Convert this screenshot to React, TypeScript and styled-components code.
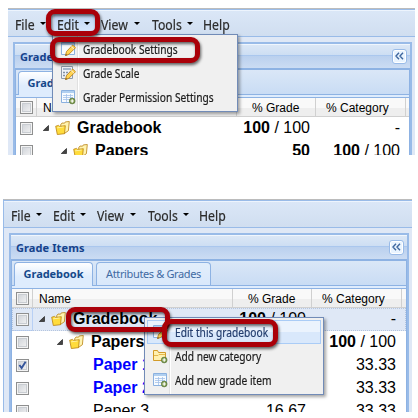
import React from "react";
import styled, { createGlobalStyle, css } from "styled-components";

const Global = createGlobalStyle`
  * { box-sizing: border-box; }
  body { margin: 0; background: #fff; overflow: hidden; }
`;

const ui = `"Noto Sans", "Open Sans", sans-serif`;
const grid = `"Liberation Sans", Arial, sans-serif`;

const Page = styled.main`
  width: 418px;
  height: 418px;
  padding: 8px 0 0 3px;
  display: flex;
  flex-direction: column;
  gap: 44px;
  background: #fff;
  font-family: ${ui};
`;

const Capture = styled.section<{ $second?: boolean }>`
  position: relative;
  width: ${(p) => (p.$second ? 409 : 407)}px;
  height: ${(p) => (p.$second ? 213 : 147)}px;
  margin-left: ${(p) => (p.$second ? 0 : 5)}px;
  overflow: hidden;
  background: #dfe8f6;
  border-top: 1px solid #bcbcbc;
  ${(p) => p.$second && css`border-left: 1px solid #99bbe8;`}
`;

const MenuBar = styled.nav`
  display: flex;
  height: 28px;
  padding-left: 7px;
  border-top: 1px solid #99bbe8;
  border-bottom: 1px solid #99bbe8;
  background: linear-gradient(#dbe7f7, #d0def0);
  box-shadow: inset 0 1px #edf4fd;
`;

const MenuEntry = styled.div<{ $w: number; $pressed?: boolean }>`
  display: flex;
  align-items: center;
  width: ${(p) => p.$w}px;
  height: 22px;
  margin-top: 3px;
  font-size: 14px;
  color: #2b2b2b;
  -webkit-text-stroke: 0.2px #2b2b2b;
  position: relative;
  ${(p) => p.$pressed && css`
    &::before {
      content: "";
      position: absolute;
      inset: 0 3px 0 -3px;
      background: linear-gradient(#bdd3f2, #dcebff);
    }
  `}
`;

const MenuLabel = styled.span<{ $w: number }>`
  position: relative;
  flex: none;
  width: ${(p) => p.$w}px;
  white-space: nowrap;
  transform: scaleX(0.875);
  transform-origin: 0 50%;
  margin-right: ${(p) => -p.$w * 0.1}px;
`;

const Caret = styled.i`
  position: relative;
  margin-top: -1px;
  border: 3px solid transparent;
  border-top: 3px solid #000;
  border-bottom: 0;
`;

const Panel = styled.div`
  margin: 5px 3px 0 5px;
  height: 200px;
  border: 2px solid #99bbe8;
`;

const PanelHeader = styled.header`
  display: flex;
  align-items: center;
  justify-content: space-between;
  height: 24px;
  padding: 0 3px 0 5px;
  background: linear-gradient(#f0f6fd 0 1px, #dbe7f6 1px, #cddef3 11px, #aac7ee 11px 12px, #bad0ee 12px, #cbdcf3 100%);
`;

const Title = styled.h2`
  margin: 0;
  font: bold 11px ${ui};
  letter-spacing: 0.1px;
  color: #15428b;
`;

const Collapse = styled.span`
  display: flex;
  align-items: center;
  justify-content: center;
  width: 15px;
  height: 15px;
  border: 1px solid #99bbe8;
  border-radius: 3px;
  background: #e9f4ff;
  box-shadow: inset 0 0 0 1px #fff;
`;

const Inner = styled.div`
  border: 1px solid #8db2e3;
  border-top-width: 2px;
  border-bottom: 0;
`;

const Tabs = styled.div`
  display: flex;
  align-items: flex-end;
  gap: 3px;
  height: 25px;
  padding-left: 2px;
  border-bottom: 1px solid #8db2e3;
  background: linear-gradient(#dae7f7, #c9dcf4);
`;

const Tab = styled.div<{ $active?: boolean }>`
  display: flex;
  align-items: center;
  justify-content: center;
  width: ${(p) => (p.$active ? 79 : 115)}px;
  height: ${(p) => (p.$active ? 24 : 23)}px;
  padding-bottom: 2px;
  margin-bottom: ${(p) => (p.$active ? -1 : 0)}px;
  border: 1px solid #8db2e3;
  border-bottom: 0;
  border-radius: 4px 4px 0 0;
  font: ${(p) => (p.$active ? "bold" : "normal")} 11px ${ui};
  letter-spacing: ${(p) => (p.$active ? -0.05 : -0.36)}px;
  white-space: nowrap;
  color: ${(p) => (p.$active ? "#15498b" : "#416aa3")};
  background: ${(p) => (p.$active ? "linear-gradient(#fff, #deecfd 60%)" : "linear-gradient(#e2eefb, #d9e8fb)")};
`;

const TabSpacer = styled.div`
  height: 3px;
  background: #deecfd;
  border-bottom: 1px solid #8db2e3;
`;

const Columns = styled.div`
  display: grid;
  grid-template-columns: 21px 200px 79px 90px 1fr;
`;

const HeadRow = styled(Columns)`
  height: 19px;
  background: linear-gradient(#f9f9f9 0 10px, #eee 10px);
  border-bottom: 1px solid #d0d0d0;
`;

const HeadCell = styled.div<{ $pad: number }>`
  padding: 3px 0 0 ${(p) => p.$pad}px;
  border-right: 1px solid #d0d0d0;
  font: 12px/15px ${grid};
  color: #000;
  white-space: nowrap;
`;

const Row = styled(Columns)<{ $selected?: boolean }>`
  height: 23px;
  background: ${(p) => (p.$selected ? "#dfe8f6" : "#fff")};
  ${(p) => p.$selected && css`
    outline: 1px dotted #b5c5de;
    outline-offset: -1px;
  `}
`;

const CheckCell = styled.div<{ $edge?: boolean }>`
  padding: 5px 0 0 4px;
  ${(p) => p.$edge && css`border-right: 1px solid #b8d0f5; border-bottom: 1px solid #b8d0f5;`}
`;

const NameCell = styled.div<{ $indent: number; $bold?: boolean; $blue?: boolean }>`
  display: flex;
  align-items: center;
  height: 22px;
  padding-left: ${(p) => p.$indent}px;
  font: ${(p) => (p.$bold ? "bold" : "normal")} 16px/22px ${grid};
  color: ${(p) => (p.$blue ? "#0000ff" : "#000")};
  white-space: nowrap;
`;

const Value = styled.div`
  font: 16px/22px ${grid};
  color: #000;
  text-align: right;
  padding-right: 6px;
  white-space: nowrap;
`;

const Box = styled.span`
  display: flex;
  width: 13px;
  height: 13px;
  border: 1px solid #8e8f8f;
  background: linear-gradient(135deg, #cbcfd5, #f6f6f6);
  box-shadow: inset 0 0 0 1px #f4f4f4, inset 0 0 0 2px #c9cdd2;
`;

const Popup = styled.div<{ $x: number; $y: number; $w: number; $h: number }>`
  position: absolute;
  left: ${(p) => p.$x}px;
  top: ${(p) => p.$y}px;
  width: ${(p) => p.$w}px;
  height: ${(p) => p.$h}px;
  padding: 2px;
  border: 1px solid #718bb7;
  background: linear-gradient(90deg, #f0f0f0 24px, #e0e0e0 24px 25px, #fff 25px 26px, #f0f0f0 26px);
  box-shadow: 2px 2px 3px rgba(0, 0, 0, 0.35);
`;

const PopupItem = styled.div<{ $active?: boolean }>`
  display: flex;
  align-items: center;
  height: 24px;
  padding-left: 4px;
  gap: 7px;
  border: 1px solid ${(p) => (p.$active ? "#aaccf6" : "transparent")};
  background: ${(p) => (p.$active ? "linear-gradient(#ebf3fd 50%, #d9e8fb 50%)" : "none")};
  font-size: 12px;
  color: ${(p) => (p.$active ? "#233d6d" : "#1c1c1c")};
  -webkit-text-stroke: 0.2px currentColor;
  white-space: nowrap;
  svg { flex: none; }
`;

const PopupLabel = styled.span`
  flex: none;
  transform: scaleX(0.85);
  transform-origin: 0 50%;
`;

const Ring = styled.div<{ $x: number; $y: number; $w: number; $h: number }>`
  position: absolute;
  left: ${(p) => p.$x}px;
  top: ${(p) => p.$y}px;
  width: ${(p) => p.$w}px;
  height: ${(p) => p.$h}px;
  border: 5px solid #aa0009;
  border-radius: 9px;
  filter: drop-shadow(1px 2px 1.5px rgba(0, 0, 0, 0.6));
`;

const Chevrons = () => (
  <svg width="9" height="8" viewBox="0 0 9 8" fill="none" stroke="#3f679f" strokeWidth="1.4">
    <path d="M4 .8 1 4l3 3.2M8 .8 5 4l3 3.2" />
  </svg>
);

const Triangle = styled.svg`
  margin-right: 6px;
`;

const Folder = styled.svg`
  margin-right: 7px;
`;

const NodeIcons = () => (
  <>
    <Triangle width="6" height="6" viewBox="0 0 6 6">
      <path d="M5.5.5v5H.3z" fill="#444" stroke="#222" strokeWidth=".7" />
    </Triangle>
    <Folder width="15" height="14" viewBox="0 0 15 14" stroke="#b98212" strokeWidth=".8">
      <path d="M5.5 4 7 2l2.5.2L10.3.9l4-.4-.9 9.2-4 2.8z" fill="#fff3b0" />
      <path d="m.7 5.2 2.8-.8 1.2 1 5.6-.7-.8 8-7.2.8z" fill="#ffdc3c" />
      <path d="M2.2 6.8 8.6 6" stroke="#fff6b8" />
    </Folder>
  </>
);

const Plus = () => (
  <g>
    <circle cx="12.2" cy="12" r="2.9" fill="#7d9a4c" stroke="#55703a" strokeWidth=".6" />
    <path d="M12.2 10.3v3.4M10.5 12h3.4" stroke="#fff" strokeWidth="1.2" />
  </g>
);

type IconKind = "window" | "calc" | "table" | "folder";
const ItemIcon = ({ kind }: { kind: IconKind }) => (
  <svg width="16" height="16" viewBox="0 0 16 16">
    {kind === "folder" ? (
      <>
        <path d="M1.5 12.5v-10h4l1 2h7v8z" fill="#fff0b0" stroke="#d39b28" />
        <path d="M2 7.5h4l1-1h6" fill="none" stroke="#e4b84d" />
      </>
    ) : kind === "calc" ? (
      <>
        <path d="M1.5 1.5h11v12h-11z" fill="#eef2f7" stroke="#8e9aaa" />
        <path d="M3 4h8" stroke="#a5b7cc" strokeWidth="2" />
        <path d="M3 7.5h8M3 10.5h6" stroke="#8391a4" strokeWidth="1.5" strokeDasharray="2 1" />
      </>
    ) : (
      <>
        <path d="M1.5 1.5h13v12h-13z" fill="#f7fbff" stroke="#8bb1df" />
        <path d="M2 3h12" stroke="#b0cff0" strokeWidth="2" />
        {kind === "table" && (
          <path d="M3 6.5h10M3 8.5h10M3 10.5h10M6.5 5v8M10.5 5v8" stroke="#a3c2e8" strokeWidth=".8" />
        )}
      </>
    )}
    {(kind === "window" || kind === "calc") && (
      <g>
        <path d="m5.5 14.5 1-4L12.7 4l2.8 2.7L9 13.2z" fill="#ffd454" stroke="#be851c" strokeWidth=".9" />
        <path d="m11.2 5.5 2.8 2.7" stroke="#f5f1e2" />
        <path d="m5.2 14.9.7-2.2 1.6 1.5z" fill="#8a6a32" />
      </g>
    )}
    {(kind === "table" || kind === "folder") && <Plus />}
  </svg>
);

const Check = ({ on }: { on?: boolean }) => (
  <Box>
    {on && (
      <svg width="11" height="11" viewBox="0 0 11 11">
        <path d="m2.4 5 2.2 3 4-6.2" fill="none" stroke="#35559b" strokeWidth="1.9" />
      </svg>
    )}
  </Box>
);

type RowData = {
  name: string;
  indent: number;
  node?: boolean;
  bold?: boolean;
  blue?: boolean;
  checked?: boolean;
  selected?: boolean;
  grade: React.ReactNode;
  category: React.ReactNode;
};

const hundred = <><b>100</b> / 100</>;

const first: RowData[] = [
  { name: "Gradebook", indent: 6, node: true, bold: true, grade: hundred, category: "-" },
  { name: "Papers", indent: 24, node: true, bold: true, grade: <b>50</b>, category: hundred },
];

const second: RowData[] = [
  { ...first[0], selected: true },
  first[1],
  { name: "Paper 1", indent: 60, bold: true, blue: true, checked: true, grade: "16.67", category: "33.33" },
  { name: "Paper 2", indent: 60, bold: true, blue: true, grade: "16.67", category: "33.33" },
  { name: "Paper 3", indent: 60, grade: "16.67", category: "33.33" },
];

const menus = [
  { label: "File", width: 42, labelWidth: 28 },
  { label: "Edit", width: 44, labelWidth: 30 },
  { label: "View", width: 51, labelWidth: 37 },
  { label: "Tools", width: 51, labelWidth: 39 },
];

const Gradebook = ({ rows, editing }: { rows: RowData[]; editing?: boolean }) => (
  <>
    <MenuBar>
      {menus.map((m) => (
        <MenuEntry key={m.label} $w={m.width} $pressed={editing && m.label === "Edit"}>
          <MenuLabel $w={m.labelWidth}>{m.label}</MenuLabel>
          <Caret />
        </MenuEntry>
      ))}
      <MenuEntry $w={40}><MenuLabel $w={34}>Help</MenuLabel></MenuEntry>
    </MenuBar>
    <Panel>
      <PanelHeader>
        <Title>Grade Items</Title>
        <Collapse><Chevrons /></Collapse>
      </PanelHeader>
      <Inner>
        <Tabs>
          <Tab $active>Gradebook</Tab>
          <Tab>Attributes &amp; Grades</Tab>
        </Tabs>
        <TabSpacer />
        <HeadRow>
          <HeadCell $pad={4}><Check /></HeadCell>
          <HeadCell $pad={6}>Name</HeadCell>
          <HeadCell $pad={15}>% Grade</HeadCell>
          <HeadCell $pad={10}>% Category</HeadCell>
        </HeadRow>
        {rows.map((r) => (
          <Row key={r.name} $selected={r.selected}>
            <CheckCell $edge={r.selected}><Check on={r.checked} /></CheckCell>
            <NameCell $indent={r.indent} $bold={r.bold} $blue={r.blue}>
              {r.node && <NodeIcons />}
              {r.name}
            </NameCell>
            <Value>{r.grade}</Value>
            <Value>{r.category}</Value>
          </Row>
        ))}
      </Inner>
    </Panel>
  </>
);

const Item = ({ kind, label, active }: { kind: IconKind; label: string; active?: boolean }) => (
  <PopupItem $active={active}>
    <ItemIcon kind={kind} />
    <PopupLabel>{label}</PopupLabel>
  </PopupItem>
);

export default function App() {
  return (
    <Page>
      <Global />
      <Capture>
        <Gradebook rows={first} editing />
        <Popup $x={44} $y={25} $w={186} $h={78}>
          <Item kind="window" label="Gradebook Settings" />
          <Item kind="calc" label="Grade Scale" />
          <Item kind="table" label="Grader Permission Settings" />
        </Popup>
        <Ring $x={38} $y={0} $w={54} $h={27} />
        <Ring $x={42} $y={28} $w={150} $h={26} />
      </Capture>
      <Capture $second>
        <Gradebook rows={second} />
        <Popup $x={140} $y={117} $w={180} $h={78}>
          <Item kind="window" label="Edit this gradebook" active />
          <Item kind="folder" label="Add new category" />
          <Item kind="table" label="Add new grade item" />
        </Popup>
        <Ring $x={62} $y={107} $w={104} $h={25} />
        <Ring $x={158} $y={119} $w={116} $h={28} />
      </Capture>
    </Page>
  );
}
